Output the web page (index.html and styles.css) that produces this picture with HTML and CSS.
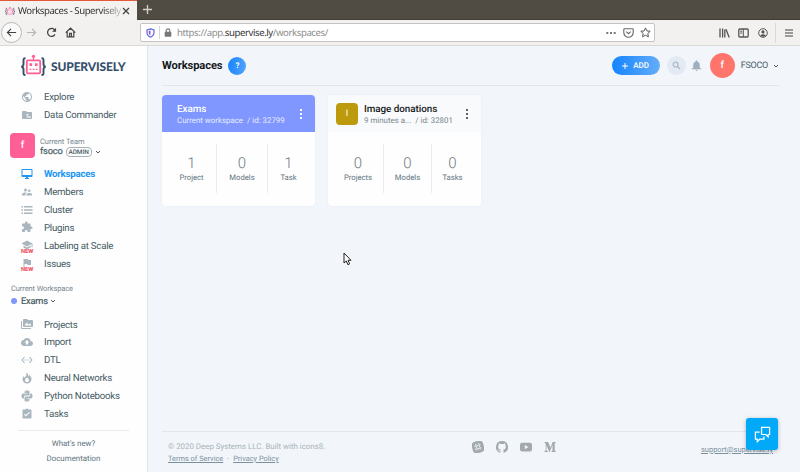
FILE: index.html
```html
<!DOCTYPE html>
<html lang="en">
<head>
<meta charset="utf-8">
<title>Workspaces - Supervisely</title>
<link rel="stylesheet" href="styles.css">
</head>
<body>
<svg width="0" height="0" class="defs">
  <symbol id="robot" viewBox="0 0 26 23">
    <g fill="none" stroke="#34506b" stroke-width="1.9"><path d="M5 4.2H4.2Q3 4.2 3 5.8V10Q3 12.5.8 12.7Q3 12.900 3 15.400V19.500Q3 21 4.200 21H5"/><path d="M21 4.200H21.800Q23 4.200 23 5.800V10Q23 12.500 25.200 12.700Q23 12.900 23 15.400V19.500Q23 21 21.800 21H21"/></g>
    <path d="M13 2v4" stroke="#ff5d93" stroke-width="1.3"/><circle cx="13" cy="2.300" r="1.600" fill="#ff5d93"/>
    <rect x="6.300" y="6.300" width="13.400" height="13" rx="1" fill="#fff" stroke="#ff5d93" stroke-width="1.800"/>
    <path d="M9 9.300h2.600v2.600H9zM14.400 9.300H17v2.600h-2.600zM9 14.700h1.700v1.300H9zM12.200 14.700h1.700v1.300h-1.700zM15.300 14.700H17v1.300h-1.700z" fill="#ff5d93"/>
  </symbol>
  <symbol id="chev" viewBox="0 0 24 24"><path d="M4 8l8 8 8-8" fill="none" stroke="currentColor" stroke-width="4"/></symbol>
  <symbol id="dots" viewBox="0 0 4 10"><path d="M1 0h2v2H1zM1 4h2v2H1zM1 8h2v2H1z" fill="currentColor"/></symbol>
</svg>

<div class="tabs">
  <div class="tab">
    <svg class="fav"><use href="#robot"/></svg>
    <span class="tab-title">Workspaces - Supervisely</span>
    <svg class="close" viewBox="0 0 8 8"><path d="M1 1l6 6M7 1L1 7" stroke="#45443f" stroke-width="1.300"/></svg>
  </div>
  <svg class="plus" viewBox="0 0 8 8"><path d="M4 0v8M0 4h8" stroke="#d2cfc8" stroke-width="1.200"/></svg>
</div>

<div class="toolbar">
  <div class="back"><svg viewBox="0 0 12 12"><path d="M11 6H1.500M5.500 2l-4 4 4 4" fill="none" stroke="#45443f" stroke-width="1.300"/></svg></div>
  <svg class="nav fwd" viewBox="0 0 12 12"><path d="M1 6h9.500M6.500 2l4 4-4 4" fill="none" stroke="#b5b4b1" stroke-width="1.300"/></svg>
  <svg class="nav reload" viewBox="0 0 12 12"><path d="M9.800 8A4.300 4.300 0 1 1 9 2.800L10.500 4.300" fill="none" stroke="#45443f" stroke-width="1.400"/><path d="M11 .8v4.400H6.600z" fill="#45443f"/></svg>
  <svg class="nav home" viewBox="0 0 12 12"><path d="M.8 6.200L6 1.300l5.200 4.900M2.400 5.500v5.300h7.200V5.500M5 10.500V7h2v3.500" fill="none" stroke="#45443f" stroke-width="1.300"/></svg>
  <div class="url">
    <svg class="shield" viewBox="0 0 10 11"><path d="M5 .9L8.900 2v3c0 2.600-1.600 4.200-3.900 5.200C2.700 9.200 1.100 7.600 1.100 5V2z" fill="#fff" stroke="#5868dc" stroke-width="1.300"/><path d="M5 2.800V8C3.600 7.300 3 6.200 3 5V3.300z" fill="#9a4ee0"/></svg>
    <i class="sep"></i>
    <svg class="lock" viewBox="0 0 8 10"><path d="M2 5V3a2 2 0 0 1 4 0v2" fill="none" stroke="#777" stroke-width="1.300"/><rect x=".3" y="4.300" width="7.400" height="5.400" rx=".8" fill="#777"/></svg>
    <span class="address">https://app.<b>supervise.ly</b>/workspaces/</span>
    <svg class="more" viewBox="0 0 10 4"><path d="M.3 1h2v2h-2zM4 1h2v2H4zM7.700 1h2v2h-2z" fill="#777"/></svg>
    <svg class="pocket" viewBox="0 0 11 10"><path d="M1.500.8h8q.7 0 .7.700v3a4.700 4.700 0 0 1-9.400 0v-3q0-.7.700-.7zM3.300 3.700l2.200 2 2.200-2" fill="none" stroke="#666" stroke-width="1.100"/></svg>
    <svg class="star" viewBox="0 0 11 11"><path d="M5.500.9l1.400 3 3.300.4-2.400 2.200.6 3.300-2.900-1.600-2.900 1.600.6-3.300L.8 4.300l3.300-.4z" fill="none" stroke="#555"/></svg>
  </div>
  <svg class="lib" viewBox="0 0 11 10"><path d="M1 .5v9M3.600 .5v9M5.800 1.500v8M7 1.200l3.200 8.300" fill="none" stroke="#555" stroke-width="1.300"/></svg>
  <svg class="side" viewBox="0 0 11 10"><rect x=".8" y="1" width="9.400" height="8" rx="1" fill="none" stroke="#555" stroke-width="1.300"/><path d="M5.300 1v8M2.200 3.200h2M2.200 5h2" stroke="#555"/></svg>
  <svg class="acct" viewBox="0 0 10 10"><circle cx="5" cy="5" r="4.300" fill="none" stroke="#555"/><circle cx="5" cy="3.900" r="1.600" fill="#555"/><path d="M2.100 7.600Q5 4.700 7.900 7.600Q5 10 2.100 7.600z" fill="#555"/></svg>
  <i class="tsep"></i>
  <svg class="burger" viewBox="0 0 8 8"><path d="M0 1h8M0 4h8M0 7h8" stroke="#45443f" stroke-width="1.100"/></svg>
</div>

<div class="app">
  <aside>
    <div class="logo"><svg><use href="#robot"/></svg><span>SUPERVISELY</span></div>
    <ul class="top-list">
      <li><svg viewBox="0 0 24 24"><path d="M12 2C6.480 2 2 6.480 2 12s4.480 10 10 10 10-4.480 10-10S17.520 2 12 2zm-1 17.930c-3.950-.49-7-3.850-7-7.930 0-.62.080-1.210.21-1.790L9 15v1c0 1.100.9 2 2 2v1.930zm6.900-2.540c-.26-.81-1-1.390-1.900-1.390h-1v-3c0-.55-.45-1-1-1H8v-2h2c.55 0 1-.45 1-1V7h2c1.100 0 2-.9 2-2v-.41c2.930 1.190 5 4.060 5 7.410 0 2.080-.8 3.970-2.100 5.390z"/></svg><span>Explore</span></li>
      <li><svg viewBox="0 0 24 24"><path fill-rule="evenodd" d="M20 6h-8l-2-2H4C2.900 4 2 4.900 2 6v12c0 1.100.9 2 2 2h16c1.100 0 2-.9 2-2V8c0-1.100-.9-2-2-2zM11 11.500a1.800 1.800 0 1 1 0 .1zM11 17v-1q2-1.500 4-1.500h1q3 .2 4 1.500v1z"/></svg><span>Data Commander</span></li>
    </ul>
    <div class="team">
      <div class="team-badge">f</div>
      <div><div class="cap">Current Team</div><div class="team-row"><span>fsoco</span><em>ADMIN</em><svg class="chev"><use href="#chev"/></svg></div></div>
    </div>
    <ul class="team-list">
      <li class="active"><svg viewBox="0 0 24 24"><path d="M21 2H3c-1.100 0-2 .9-2 2v12c0 1.100.9 2 2 2h7v2H8v2h8v-2h-2v-2h7c1.100 0 2-.9 2-2V4c0-1.100-.9-2-2-2zm0 12H3V4h18v10z"/></svg><span>Workspaces</span></li>
      <li><svg viewBox="0 0 24 24"><path d="M16.500 12A2.500 2.500 0 1 0 16.500 7a2.500 2.500 0 0 0 0 5zM9 11A3 3 0 1 0 9 5a3 3 0 0 0 0 6zm7.500 3c-1.830 0-5.500.92-5.500 2.750V19h11v-2.250C22 14.920 18.330 14 16.500 14zM9 13c-2.330 0-7 1.170-7 3.500V19h7v-2.250c0-.85.330-2.340 2.370-3.470C10.500 13.100 9.660 13 9 13z"/></svg><span>Members</span></li>
      <li><svg viewBox="0 0 24 24"><path d="M1 4h3v3H1zm5 0h17v3H6zM1 10.500h3v3H1zm5 0h17v3H6zM1 17h3v3H1zm5 0h17v3H6z"/></svg><span>Cluster</span></li>
      <li><svg viewBox="0 0 24 24"><path d="M20.500 11H19V7c0-1.100-.9-2-2-2h-4V3.500a2.500 2.500 0 0 0-5 0V5H4c-1.100 0-2 .9-2 2v3.800h1.500a2.700 2.700 0 0 1 0 5.400H2V20c0 1.100.9 2 2 2h3.800v-1.500a2.700 2.700 0 0 1 5.400 0V22H17c1.100 0 2-.9 2-2v-4h1.500a2.500 2.500 0 0 0 0-5z"/></svg><span>Plugins</span></li>
      <li class="new"><svg viewBox="0 0 24 24"><path d="M5 13.200v4L12 21l7-3.800v-4L12 17zM12 3L1 9l11 6 9-4.900V17h2V9z"/></svg><b>NEW</b><span>Labeling at Scale</span></li>
      <li class="new"><svg viewBox="0 0 24 24"><path d="M14.400 6L14 4H5v17h2v-7h5.600l.4 2h7V6z"/></svg><b>NEW</b><span>Issues</span></li>
    </ul>
    <div class="ws-cap">Current Workspace</div>
    <div class="ws-row"><i></i><span>Exams</span><svg class="chev"><use href="#chev"/></svg></div>
    <ul class="ws-list">
      <li><svg viewBox="0 0 24 24"><path fill-rule="evenodd" d="M2 6H0v14c0 1.100.9 2 2 2h18v-2H2zM22 4h-8l-2-2H6c-1.100 0-2 .9-2 2v12c0 1.100.9 2 2 2h16c1.100 0 2-.9 2-2V6c0-1.100-.9-2-2-2zM7 15l4.500-6 3.500 4.500 2.500-3L21 15z"/></svg><span>Projects</span></li>
      <li><svg viewBox="0 0 24 24"><path d="M19.350 10.040A7.490 7.490 0 0 0 12 4C9.110 4 6.600 5.640 5.350 8.040A5.990 5.990 0 0 0 0 14c0 3.310 2.690 6 6 6h13c2.760 0 5-2.240 5-5 0-2.640-2.050-4.780-4.650-4.960zM14 13v4h-4v-4H7l5-5 5 5h-3z"/></svg><span>Import</span></li>
      <li><svg viewBox="0 0 24 24"><path d="M7.770 6.760L6.230 5.480.82 12l5.410 6.520 1.540-1.280L3.420 12zM7 13h2v-2H7zm10-2h-2v2h2zm-6 2h2v-2h-2zm6.770-7.520l-1.540 1.280L20.580 12l-4.350 5.240 1.540 1.280L23.180 12z"/></svg><span>DTL</span></li>
      <li><svg viewBox="0 0 24 24"><path fill-rule="evenodd" d="M11 1c4 3 4 5 3 8 2-.5 2-2 2-3.500C19 8 21 11 21 14a9 9 0 0 1-18 0c0-3 2-5 3-6 0 2 .5 3 2 3 2-3 4-6 3-10zM12 11q-4 2-4 5.500a4 4 0 0 0 8 0Q16 13 12 11z"/></svg><span>Neural Networks</span></li>
      <li><svg viewBox="0 0 24 24"><path fill-rule="evenodd" d="M12 1c-4 0-5 1-5 3v2h6v1H4c-2 0-3 2-3 5s1 5 3 5h2v-3c0-2 1-3 3-3h5c2 0 3-1 3-3V4c0-2-1-3-5-3zM9 3h1.500v1.500H9zM18 7v3c0 2-1 3-3 3h-5c-2 0-3 1-3 3v4c0 2 1 3 5 3s5-1 5-3v-2h-6v-1h9c2 0 3-2 3-5s-1-5-3-5zM13.500 19.500H15V21h-1.500z"/></svg><span>Python Notebooks</span></li>
      <li><svg viewBox="0 0 24 24"><path d="M19 3h-4.180C14.400 1.840 13.300 1 12 1s-2.400.84-2.820 2H5c-1.100 0-2 .9-2 2v14c0 1.100.9 2 2 2h14c1.100 0 2-.9 2-2V5c0-1.100-.9-2-2-2zm-9 14l-4-4 1.410-1.410L10 14.170l6.590-6.590L18 9z"/></svg><span>Tasks</span></li>
    </ul>
    <div class="links"><div>What's new?</div><div>Documentation</div></div>
  </aside>

  <main>
    <header>
      <h1>Workspaces</h1><div class="help">?</div>
      <div class="add"><svg viewBox="0 0 6 6"><path d="M3 0v6M0 3h6" stroke="#fff"/></svg>ADD</div>
      <div class="search"><svg viewBox="0 0 10 10"><circle cx="4" cy="4" r="2.700" fill="none" stroke="#a9b9c4" stroke-width="1.300"/><path d="M6 6l3 3" stroke="#a9b9c4" stroke-width="1.500"/></svg></div>
      <svg class="bell" viewBox="0 0 24 24"><path d="M12 22c1.100 0 2-.9 2-2h-4c0 1.100.9 2 2 2zm6-6v-5c0-3.070-1.640-5.640-4.500-6.320V4a1.500 1.500 0 0 0-3 0v.68C7.630 5.360 6 7.920 6 11v5l-3 2v1h18v-1z" fill="#9fb0bc"/></svg>
      <div class="avatar">f</div><span class="user">FSOCO</span><svg class="chev"><use href="#chev"/></svg>
    </header>
    <section class="cards">
      <article class="card current">
        <div class="head"><div class="info"><h2>Exams</h2><p>Current workspace<span>/ id: 32799</span></p></div><svg class="dots"><use href="#dots"/></svg></div>
        <div class="stats"><div><strong>1</strong>Project</div><div><strong>0</strong>Models</div><div><strong>1</strong>Task</div></div>
      </article>
      <article class="card">
        <div class="head"><div class="pic">I</div><div class="info"><h2>Image donations</h2><p>9 minutes a...<span>/ id: 32801</span></p></div><svg class="dots"><use href="#dots"/></svg></div>
        <div class="stats plural"><div><strong>0</strong>Projects</div><div><strong>0</strong>Models</div><div><strong>0</strong>Tasks</div></div>
      </article>
    </section>
    <footer>
      <div class="legal"><div class="copy">© 2020 Deep Systems LLC. Built with icons8.</div><div class="terms"><u>Terms of Service</u><span>·</span><u>Privacy Policy</u></div></div>
      <div class="social">
        <svg viewBox="0 0 12 12"><g transform="rotate(-15 6 6)"><rect x=".1" y=".1" width="11.800" height="11.800" rx="4" fill="#a3aaac"/><path d="M4.500 2.500v7M7.500 2.500v7M2.500 4.500h7M2.500 7.500h7" stroke="#f2f6fb" stroke-width=".9" stroke-dasharray="1.700 .7"/></g></svg>
        <svg viewBox="0 0 16 16"><path d="M8 0a8 8 0 0 0-2.530 15.590c.4.070.55-.17.550-.38v-1.490c-2.010.37-2.530-.49-2.690-.94-.09-.23-.48-.94-.82-1.130-.28-.15-.68-.52-.01-.53.630-.01 1.080.58 1.230.82.720 1.210 1.870.87 2.330.66.070-.52.280-.87.510-1.070-1.780-.2-3.640-.89-3.640-3.950 0-.87.310-1.590.82-2.150-.08-.2-.36-1.020.08-2.120 0 0 .67-.21 2.200.82a7.600 7.600 0 0 1 4 0c1.530-1.040 2.200-.82 2.200-.82.440 1.100.16 1.920.08 2.120.51.560.82 1.270.82 2.150 0 3.070-1.870 3.750-3.650 3.950.29.250.54.730.54 1.480v2.200c0 .21.150.46.550.38A8 8 0 0 0 8 0z" fill="#a3aaac"/></svg>
        <svg viewBox="0 0 12 12"><rect x="0" y="1.700" width="12" height="8.800" rx="2" fill="#a3aaac"/><path d="M4.800 4v4.200L8.300 6.100z" fill="#f2f6fb"/></svg>
        <svg viewBox="0 0 12 12"><path d="M.5 1h3.600L6.500 6.500 8.700 1h3v.7l-1 .8v7l1 .8v.7H7.500v-.7l1-.8V4L5.700 11h-.4L2.500 4.500v4.700L3.900 10.500v.5H.3v-.5L1.700 9.200V2.800L.5 1.600z" fill="#a3aaac"/></svg>
      </div>
      <u class="support">support@supervise.ly</u>
    </footer>
  </main>
</div>
<div class="chat"><svg viewBox="0 0 18 18"><path d="M8 1.500h8.500v7.500h-1.500v2.500L12.500 9H8z" fill="none" stroke="#fff" stroke-width="1.300"/><path d="M6 6.500H1.500V14H3.500v2.500L6 14h4.500v-3" fill="none" stroke="#fff" stroke-width="1.300"/></svg></div>
<svg class="cursor" viewBox="0 0 9 14"><path d="M1 1v10l2.300-2 1.600 3.700 1.700-.8L5 8.300h3z" fill="#fff" stroke="#222"/></svg>
</body>
</html>
```

FILE: styles.css
```css
* { box-sizing: border-box; }
body { margin: 0; width: 800px; height: 472px; overflow: hidden; font-family: Roboto, "Liberation Sans", sans-serif; color: #455a64; background: #f2f6fb; display: flex; flex-direction: column; position: relative; text-rendering: geometricPrecision; }
.defs { position: absolute; }
svg { flex: none; display: block; }
ul { list-style: none; margin: 0; padding: 0; }
h1, h2, p { margin: 0; }
i { display: block; flex: none; }

.tabs { height: 20px; background: #504c44; border-bottom: 1px solid #403d38; display: flex; align-items: center; flex: none; }
.tab { width: 137px; height: 20px; align-self: flex-start; background: #f3f2f0; border-top: 1px solid #e35b36; display: flex; align-items: center; padding-left: 5px; }
.fav { width: 10px; height: 10px; margin-right: 3px; }
.tab-title { font: 9.6px/18px "Noto Sans", sans-serif; letter-spacing: -.45px; color: #33332f; width: 103px; white-space: nowrap; -webkit-mask-image: linear-gradient(90deg, #000 82%, #0003); }
.close { width: 8px; height: 8px; margin-left: 1px; }
.plus { width: 9px; height: 9px; margin-left: 6px; }

.toolbar { height: 26px; background: #f2f1ef; border-bottom: 1px solid #d9d9d8; display: flex; align-items: center; flex: none; padding-left: 1px; }
.back { width: 21px; height: 21px; border: 1px solid #b9b8b5; border-radius: 50%; background: #fafafa; display: grid; place-items: center; }
.back svg { width: 11px; height: 11px; }
.nav { width: 11px; height: 11px; }
.fwd { margin-left: 4px; }
.reload { margin-left: 9px; }
.home { margin-left: 8px; }
.url { width: 515px; height: 19px; margin-left: 64px; border: 1px solid #c5c4c2; border-radius: 2px; background: #fff; display: flex; align-items: center; padding-left: 5px; }
.shield { width: 9px; height: 10px; }
.sep { width: 1px; height: 13px; background: #d5d5d5; margin: 0 4px 0 4px; }
.lock { width: 8px; height: 9px; }
.address { font: 9.6px/17px "Noto Sans", sans-serif; letter-spacing: -.42px; color: #8c8c8c; margin-left: 5px; flex: 1; }
.address b { font-weight: 400; color: #333; }
.more { width: 10px; height: 4px; margin-right: 7px; }
.pocket { width: 11px; height: 10px; margin-right: 6px; }
.star { width: 11px; height: 11px; margin-right: 3px; }
.lib { width: 11px; height: 10px; margin-left: 64px; }
.side { width: 11px; height: 10px; margin-left: 8px; }
.acct { width: 10px; height: 10px; margin-left: 9px; }
.tsep { width: 1px; height: 20px; background: #dad9d6; margin: 0 9px 0 7px; }
.burger { width: 8px; height: 8px; }

.app { flex: 1; display: flex; min-height: 0; }
aside { width: 148px; background: #fefefe; border-right: 1px solid #dfe5ea; flex: none; display: flex; flex-direction: column; }
.logo { height: 23px; margin: 8px 0 0 20px; display: flex; align-items: center; }
.logo svg { width: 27px; height: 23px; }
.logo span { font: 900 12px/14px Lato, sans-serif; letter-spacing: -.15px; color: #34506b; margin: 2px 0 0 4px; }
li { height: 17.900px; display: flex; align-items: center; padding-left: 21px; font-size: 9.700px; letter-spacing: -.25px; white-space: nowrap; position: relative; }
li svg { width: 12px; height: 12px; fill: #a9b6be; margin-right: 11px; }
li span { padding-top: 2px; }
li.active { color: #2196f3; font-weight: 700; }
li.active svg { fill: #2196f3; }
li b { position: absolute; left: 21px; top: 13px; font: 700 5.800px/6px Roboto, sans-serif; letter-spacing: 0; color: #f44355; }
.top-list { margin-top: 11px; }
.team { display: flex; margin: 9px 0 0 10px; height: 25px; }
.team-badge { width: 25px; height: 25px; border-radius: 4px; background: #ff5f97; color: #fff; font-size: 10px; font-weight: 500; line-height: 25px; text-align: center; margin-right: 5px; }
.cap { font-size: 7.500px; letter-spacing: -.05px; line-height: 9px; color: #78868e; padding-top: 4px; }
.team-row { display: flex; align-items: center; height: 12px; font-size: 9.300px; letter-spacing: -.2px; }
.team-row span, .ws-row span { -webkit-text-stroke: .2px; }
.team-row em { font: 500 6.500px/8px Roboto, sans-serif; letter-spacing: -.1px; border: 1px solid #a7b0b5; border-radius: 4px; padding: 0 2px; margin: 1px 3px 0; height: 10px; }
.chev { width: 6px; height: 6px; }
.team-list { margin-top: 7px; }
.ws-cap { font-size: 7.500px; letter-spacing: -.1px; line-height: 9px; color: #78868e; margin: 12px 0 0 11px; }
.ws-row { display: flex; align-items: center; height: 14px; margin: 1px 0 0 11px; font-size: 9.300px; letter-spacing: -.2px; }
.ws-row i { width: 6px; height: 6px; border-radius: 50%; background: #7f97ff; margin-right: 4px; }
.ws-row .chev { margin-left: 2px; }
.ws-list { margin-top: 7px; }
.links { margin: 8px 18px 0; border-top: 1px solid #e8ebed; padding-top: 5px; text-align: center; font-size: 7.900px; line-height: 15px; color: #607480; }

main { flex: 1; padding: 0 21px 0 14px; display: flex; flex-direction: column; }
header { height: 40px; border-bottom: 1px solid #e0e7ed; display: flex; align-items: center; }
h1 { font-size: 11.200px; letter-spacing: -.12px; font-weight: 700; color: #15191c; }
.help { width: 18px; height: 18px; border-radius: 50%; background: linear-gradient(100deg, #1484ff, #55a4fa); color: #fff; font-size: 8px; font-weight: 700; line-height: 18px; text-align: center; margin-left: 6px; }
.add { width: 48px; height: 19px; border-radius: 10px; background: linear-gradient(90deg, #1484ff, #65adf8); color: #fff; font-size: 8px; font-weight: 500; display: flex; align-items: center; justify-content: center; gap: 5px; margin-left: auto; }
.add svg { width: 6px; height: 6px; }
.search { width: 19px; height: 19px; border-radius: 50%; background: #e4eaf4; display: grid; place-items: center; margin-left: 7px; }
.search svg { width: 9px; height: 9px; }
.bell { width: 13px; height: 13px; margin-left: 4px; }
.avatar { width: 25px; height: 25px; border-radius: 50%; background: #ff756c; color: #fff; font-size: 10px; font-weight: 500; line-height: 25px; text-align: center; margin-left: 7px; }
.user { font-size: 9px; letter-spacing: -.25px; margin: 0 5px 0 6px; }
.cards { display: flex; gap: 13px; margin-top: 9px; }
.card { width: 153px; height: 111px; background: #fefefe; border-radius: 4px; overflow: hidden; box-shadow: 0 0 2px #e4eaf0; }
.head { height: 37px; display: flex; align-items: center; padding: 1px 12px 0 8px; background: #f9fafb; }
.current .head { background: #7f97ff; padding-left: 15px; }
.pic { width: 22px; height: 22px; border-radius: 4px; background: #bd9a0b; color: #fff; font-size: 9px; line-height: 22px; text-align: center; margin-right: 6px; }
.info { flex: 1; white-space: nowrap; }
h2 { font-size: 9.900px; letter-spacing: -.05px; line-height: 13px; font-weight: 500; color: #15191c; }
.head p { font-size: 7.900px; line-height: 11px; color: #78868e; }
.head p span { margin-left: 4px; }
.current h2, .current p { color: #fff; }
.head p { margin-top: -1px; }
.current p { color: #e8ecff; }
.dots { width: 4px; height: 10px; color: #59666d; }
.current .dots { color: #fff; }
.stats { display: grid; grid-template-columns: 50px 51px 41px; padding: 12px 0 0 5px; }
.stats.plural { grid-template-columns: 51px 48px 41px; }
.stats div { height: 49px; border-right: 1px solid #e9edef; text-align: center; font-size: 7.700px; line-height: 10px; color: #607480; padding-top: 10px; }
.stats div:last-child { border: 0; }
.stats strong { display: block; font-size: 15px; font-weight: 300; line-height: 19px; color: #737b80; }
footer { margin-top: auto; height: 41px; border-top: 1px solid #e0e7ed; display: flex; position: relative; padding: 9px 6px 0; }
.legal { font-size: 7.900px; line-height: 12px; width: 304px; color: #a9b3ba; }
.terms { font-size: 7.400px; color: #7b909d; }
.terms span { margin: 0 4px; }
.social { display: flex; gap: 12px; }
.social svg { width: 12px; height: 12px; }
.support { font-size: 7.500px; line-height: 10px; color: #7b909d; margin: 4px 0 0 auto; }
.chat { position: absolute; left: 746px; top: 418px; width: 32px; height: 32px; border-radius: 3px; background: #03a9f9; box-shadow: 0 1px 4px #0004; display: grid; place-items: center; }
.chat svg { width: 17px; height: 17px; }
.cursor { position: absolute; left: 343px; top: 252px; width: 9px; height: 14px; }
```
